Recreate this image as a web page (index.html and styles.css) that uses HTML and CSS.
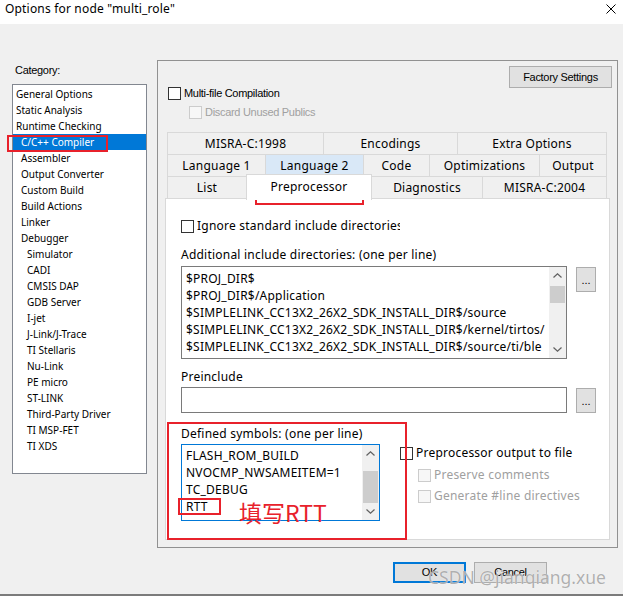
FILE: index.html
```html
<!DOCTYPE html>
<html>
<head>
<meta charset="utf-8">
<title>Options for node "multi_role"</title>
<link rel="stylesheet" href="styles.css">
</head>
<body>
<div class="window">

<div class="titlebar">
  <span class="title">Options for node "multi_role"</span>
  <svg class="close" width="10" height="10" viewBox="0 0 10 10"><path d="M0.5 0.5L9.5 9.5M9.5 0.5L0.5 9.5" stroke="#000" stroke-width="1" fill="none"/></svg>
</div>

<div class="content">
  <div class="main">

    <div class="category">
      <div class="cat-label">Category:</div>
      <ul class="cat-list">
        <li class="lv0">General Options</li>
        <li class="lv0">Static Analysis</li>
        <li class="lv0">Runtime Checking</li>
        <li class="lv1 sel">C/C++ Compiler</li>
        <li class="lv1">Assembler</li>
        <li class="lv1">Output Converter</li>
        <li class="lv1">Custom Build</li>
        <li class="lv1">Build Actions</li>
        <li class="lv1">Linker</li>
        <li class="lv1">Debugger</li>
        <li class="lv2">Simulator</li>
        <li class="lv2">CADI</li>
        <li class="lv2">CMSIS DAP</li>
        <li class="lv2">GDB Server</li>
        <li class="lv2">I-jet</li>
        <li class="lv2">J-Link/J-Trace</li>
        <li class="lv2">TI Stellaris</li>
        <li class="lv2">Nu-Link</li>
        <li class="lv2">PE micro</li>
        <li class="lv2">ST-LINK</li>
        <li class="lv2">Third-Party Driver</li>
        <li class="lv2">TI MSP-FET</li>
        <li class="lv2">TI XDS</li>
      </ul>
    </div>

    <div class="panel">
      <div class="panel-top">
        <div class="compile-opts">
          <div class="chk small"><span class="box"></span>Multi-file Compilation</div>
          <div class="chk small sub disabled"><span class="box"></span>Discard Unused Publics</div>
        </div>
        <div class="btn factory">Factory Settings</div>
      </div>

      <div class="tabs">
        <div class="tab-row row1">
          <div class="tab">MISRA-C:1998</div>
          <div class="tab">Encodings</div>
          <div class="tab">Extra Options</div>
        </div>
        <div class="tab-row row2">
          <div class="tab">Language 1</div>
          <div class="tab hover">Language 2</div>
          <div class="tab">Code</div>
          <div class="tab">Optimizations</div>
          <div class="tab">Output</div>
        </div>
        <div class="tab-row row3">
          <div class="tab">List</div>
          <div class="tab active">Preprocessor</div>
          <div class="tab">Diagnostics</div>
          <div class="tab">MISRA-C:2004</div>
        </div>
      </div>

      <div class="page">
        <div class="chk"><span class="box"></span><span class="clip">Ignore standard include directories</span></div>

        <div class="field-label gap">Additional include directories: (one per line)</div>
        <div class="field-row tight">
          <div class="editbox includes">
            <div class="lines">
              <div>$PROJ_DIR$</div>
              <div>$PROJ_DIR$/Application</div>
              <div>$SIMPLELINK_CC13X2_26X2_SDK_INSTALL_DIR$/source</div>
              <div>$SIMPLELINK_CC13X2_26X2_SDK_INSTALL_DIR$/kernel/tirtos/</div>
              <div>$SIMPLELINK_CC13X2_26X2_SDK_INSTALL_DIR$/source/ti/ble</div>
            </div>
            <div class="vscroll">
              <span class="arrow"><svg width="9" height="5" viewBox="0 0 9 5"><path d="M0.5 4.5L4.5 0.8L8.5 4.5" stroke="#606060" stroke-width="1.2" fill="none"/></svg></span>
              <span class="track"><span class="thumb inc-thumb"></span></span>
              <span class="arrow"><svg width="9" height="5" viewBox="0 0 9 5"><path d="M0.5 0.5L4.5 4.2L8.5 0.5" stroke="#606060" stroke-width="1.2" fill="none"/></svg></span>
            </div>
          </div>
          <div class="btn dots">...</div>
        </div>

        <div class="field-label">Preinclude</div>
        <div class="field-row">
          <div class="editbox single"></div>
          <div class="btn dots">...</div>
        </div>

        <div class="field-label gap">Defined symbols: (one per line)</div>
        <div class="field-row">
          <div class="editbox symbols">
            <div class="lines">
              <div>FLASH_ROM_BUILD</div>
              <div>NVOCMP_NWSAMEITEM=1</div>
              <div>TC_DEBUG</div>
              <div>RTT</div>
            </div>
            <div class="vscroll">
              <span class="arrow"><svg width="9" height="5" viewBox="0 0 9 5"><path d="M0.5 4.5L4.5 0.8L8.5 4.5" stroke="#606060" stroke-width="1.2" fill="none"/></svg></span>
              <span class="track"><span class="thumb sym-thumb"></span></span>
              <span class="arrow"><svg width="9" height="5" viewBox="0 0 9 5"><path d="M0.5 0.5L4.5 4.2L8.5 0.5" stroke="#606060" stroke-width="1.2" fill="none"/></svg></span>
            </div>
          </div>
          <div class="pp-opts">
            <div class="chk"><span class="box"></span>Preprocessor output to file</div>
            <div class="chk sub disabled"><span class="box"></span>Preserve comments</div>
            <div class="chk sub disabled"><span class="box"></span>Generate #line directives</div>
          </div>
        </div>
      </div>
    </div>

  </div>

  <div class="footer">
    <div class="btn default">OK</div>
    <div class="btn">Cancel</div>
  </div>
</div>

<!-- red annotations drawn over the screenshot -->
<div class="mark mark-cat"></div>
<div class="mark mark-tab"></div>
<div class="mark mark-defs"></div>
<div class="mark mark-rtt"></div>
<div class="note">填写RTT</div>
<div class="watermark">CSDN @jianqiang.xue</div>

</div>
</body>
</html>
```

FILE: styles.css
```css
* {
	box-sizing: border-box;
}
body {
	margin: 0;
	width: 623px;
	height: 596px;
	overflow: hidden;
	background: #F0F0F0;
	font-family: "Noto Sans", sans-serif;
	font-size: 12px;
	letter-spacing: 0.22px;
	color: #000000;
}
.window {
	position: relative;
	width: 623px;
	height: 596px;
	border-bottom: 2px solid #7B7B7B;
}

/* title bar */
.titlebar {
	height: 24px;
	background: #FFFFFF;
	display: flex;
	justify-content: space-between;
	padding: 0 7px 0 5px;
}
.title {
	font-size: 12px;
	letter-spacing: 0.18px;
	line-height: 18px;
}
.close {
	margin-top: 4px;
}

.content {
	padding-top: 36px;
}
.main {
	display: flex;
	align-items: flex-start;
	gap: 10px;
	padding-left: 12px;
}

/* category list */
.cat-label {
	font-family: "Liberation Sans", sans-serif;
	font-size: 11px;
	letter-spacing: -0.3px;
	line-height: 16px;
	padding: 2px 0 0 3px;
	margin-bottom: 6px;
}
.cat-list {
	list-style: none;
	margin: 0;
	padding: 1px 0 0 0;
	width: 135px;
	height: 390px;
	background: #FFFFFF;
	border: 1px solid #828790;
	font-size: 10px;
	letter-spacing: 0;
}
.cat-list li {
	line-height: 16px;
	height: 16px;
	white-space: nowrap;
}
.lv0 { padding-left: 3px; }
.lv1 { padding-left: 8px; }
.lv2 { padding-left: 14px; }
.cat-list .sel {
	background: #0078D7;
	color: #FFFFFF;
}

/* options panel */
.panel {
	width: 461px;
	height: 488px;
	border: 1px solid #919191;
}
.panel-top {
	display: flex;
	justify-content: space-between;
	align-items: flex-start;
	padding: 5px 5px 0 10px;
}
.compile-opts {
	margin-top: 19px;
}
.compile-opts .sub {
	margin-top: 3px;
}

.chk {
	display: flex;
	align-items: center;
	height: 16px;
	line-height: 16px;
	white-space: nowrap;
}
.chk .box {
	width: 13px;
	height: 13px;
	border: 1px solid #333333;
	background: #FFFFFF;
	margin-right: 3px;
	flex: none;
}
.chk.small {
	font-family: "Liberation Sans", sans-serif;
	font-size: 11px;
	letter-spacing: -0.3px;
}
.chk.sub {
	margin-left: 21px;
}
.chk.disabled {
	color: #A0A0A0;
}
.chk.disabled .box {
	border-color: #CCCCCC;
	background: #F7F7F7;
}
.clip {
	display: block;
	width: 203px;
	overflow: hidden;
}

.btn {
	background: #E1E1E1;
	border: 1px solid #ADADAD;
	text-align: center;
	font-family: "Liberation Sans", sans-serif;
	font-size: 11px;
	letter-spacing: -0.3px;
}
.factory {
	width: 103px;
	height: 22px;
	line-height: 20px;
}

/* tabs */
.tabs {
	margin: 12px 0 0 9px;
	width: 440px;
}
.tab-row {
	display: grid;
	height: 22px;
}
.row1 { grid-template-columns: 156px 134px 150px; }
.row2 { grid-template-columns: 98px 98px 66px 110px 68px; }
.row3 { grid-template-columns: 79px 126px 110px 125px; }
.tab {
	height: 22px;
	border-top: 1px solid #D9D9D9;
	border-left: 1px solid #D9D9D9;
	text-align: center;
	line-height: 21px;
	white-space: nowrap;
}
.tab:last-child {
	border-right: 1px solid #D9D9D9;
}
.tab.hover {
	background: #D9E8F7;
}
.tab.active {
	position: relative;
	z-index: 1;
	height: 26px;
	margin-top: -2px;
	line-height: 24px;
	background: #FFFFFF;
	border-right: 1px solid #D9D9D9;
}
.tab.active + .tab {
	border-left: none;
}

.page {
	margin-left: 7px;
	width: 445px;
	height: 342px;
	background: #FFFFFF;
	border: 1px solid #D9D9D9;
	padding: 19px 0 0 15px;
}
.field-label {
	line-height: 16px;
	margin-top: 10px;
}
.field-label.gap {
	margin-top: 13px;
}
.field-label + .field-row {
	margin-top: 2px;
}
.field-label + .field-row.tight {
	margin-top: 3px;
}
.field-row {
	display: flex;
	align-items: flex-start;
}
.editbox {
	display: flex;
	background: #FFFFFF;
	border: 1px solid #7A7A7A;
	flex: none;
}
.editbox.includes {
	width: 386px;
	height: 93px;
}
.editbox.single {
	width: 386px;
	height: 26px;
}
.editbox.symbols {
	width: 199px;
	height: 77px;
	border-color: #0078D7;
}
.lines {
	flex: 1;
	overflow: hidden;
	white-space: nowrap;
	line-height: 17px;
	padding: 3px 0 0 4px;
}
.symbols .lines {
	padding-top: 2px;
}
.vscroll {
	width: 17px;
	display: flex;
	flex-direction: column;
	background: #F0F0F0;
}
.vscroll .arrow {
	height: 17px;
	display: flex;
	align-items: center;
	justify-content: center;
	flex: none;
}
.vscroll .track {
	flex: 1;
	display: flex;
	flex-direction: column;
}
.thumb {
	background: #CDCDCD;
	margin: 0 1px;
}
.inc-thumb {
	margin-top: 2px;
	height: 17px;
}
.sym-thumb {
	margin-top: 9px;
	height: 32px;
}
.dots {
	width: 20px;
	height: 25px;
	line-height: 25px;
	margin: 1px 0 0 9px;
	letter-spacing: 0;
}
.pp-opts {
	margin: 1px 0 0 20px;
}
.pp-opts .sub {
	margin-left: 18px;
	margin-top: 6px;
}
.pp-opts .sub + .sub {
	margin-top: 5px;
}

/* dialog buttons */
.footer {
	display: flex;
	justify-content: flex-end;
	gap: 8px;
	padding: 14px 76px 0 0;
}
.footer .btn {
	width: 73px;
	height: 21px;
	line-height: 19px;
}
.footer .default {
	border: 2px solid #0078D7;
	line-height: 17px;
}

/* annotations */
.mark {
	position: absolute;
	border: 2px solid #E8212B;
}
.mark-cat { left: 7px; top: 135px; width: 101px; height: 17px; }
.mark-tab { left: 255px; top: 174px; width: 109px; height: 31px; }
.mark-defs { left: 167px; top: 422px; width: 240px; height: 118px; }
.mark-rtt { left: 178px; top: 498px; width: 43px; height: 17px; }
.note {
	position: absolute;
	left: 239px;
	top: 499px;
	font-family: "Noto Sans CJK SC", "Noto Sans", sans-serif;
	font-size: 23px;
	letter-spacing: 0;
	line-height: 26px;
	color: #E8212B;
}
.watermark {
	position: absolute;
	left: 428px;
	top: 565px;
	font-size: 17.5px;
	letter-spacing: 0;
	line-height: 24px;
	color: rgba(150, 150, 150, 0.75);
	text-shadow: 0 0 1px #FFFFFF;
	white-space: nowrap;
}
```
